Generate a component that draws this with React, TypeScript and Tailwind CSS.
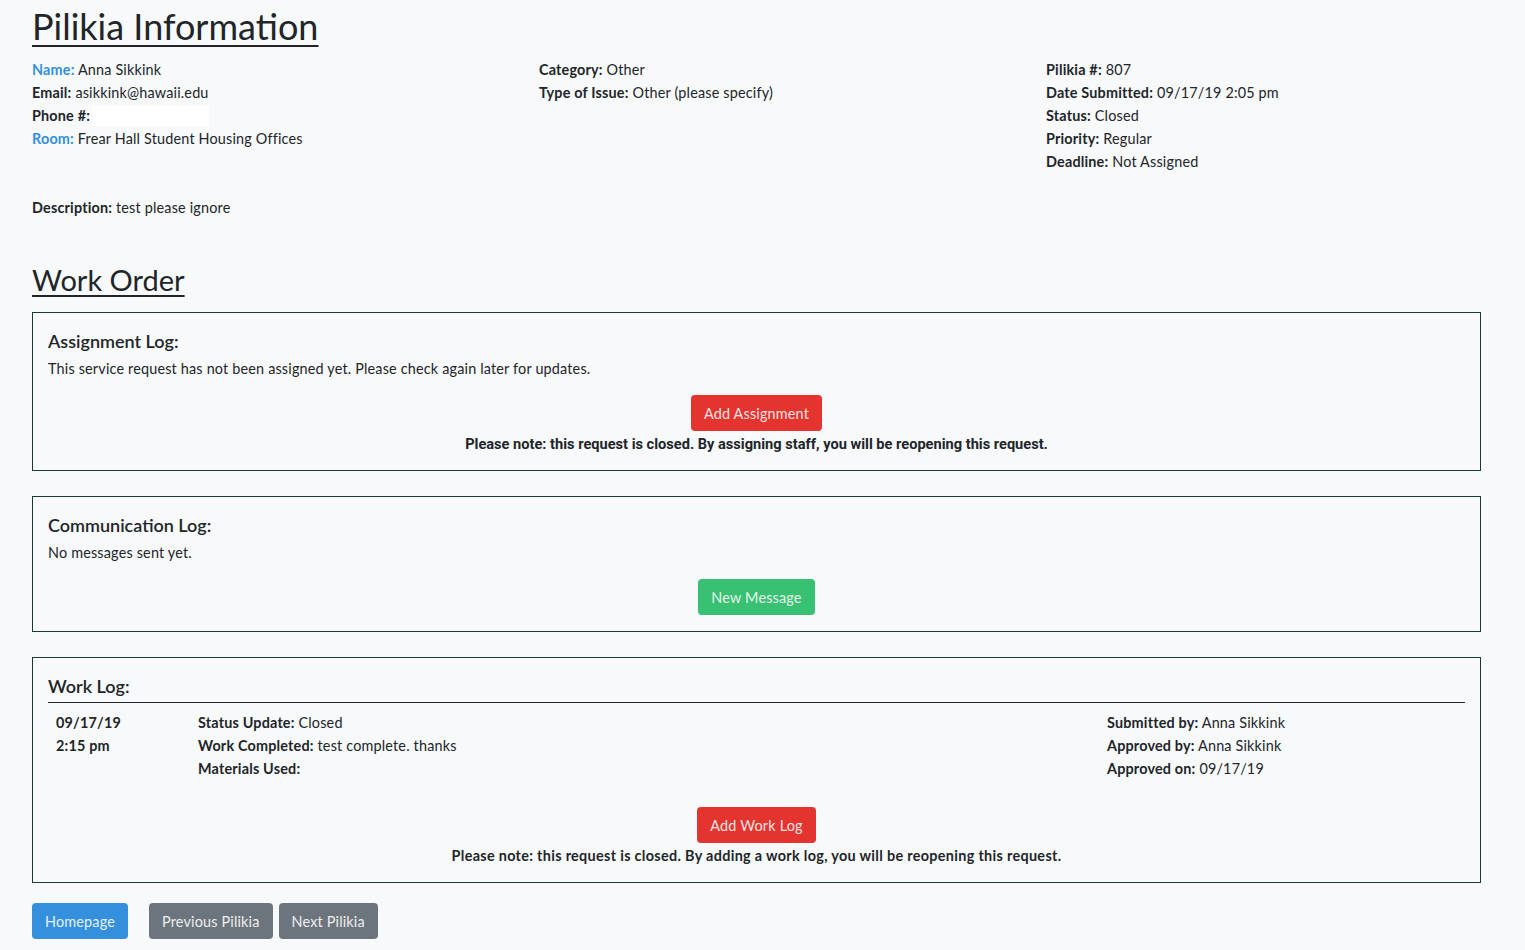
const font = "font-['Lato','Noto_Sans',sans-serif]";

function Field({ label, value, blue }: { label: string; value?: string; blue?: boolean }) {
  return (
    <div className="h-[23px]">
      <span className={blue ? "font-bold text-[#3490dc]" : "font-bold"}>{label}</span> {value}
    </div>
  );
}

function Box({ children, pb = "pb-[15px]" }: { children: React.ReactNode; pb?: string }) {
  return <div className={`border border-[#1c3b34] px-[15px] pt-[17px] ${pb}`}>{children}</div>;
}

export default function App() {
  return (
    <div className={`min-h-[950px] bg-[#f8f9fa] text-[#212529] text-[14.4px] leading-[23px] tracking-[0.18px] ${font}`}>
      <div className="pl-[32px] pr-[44px] pt-[4px]">
        <h1 className="text-[36px] leading-[44px] tracking-normal underline decoration-[2px] underline-offset-[5px]">Pilikia Information</h1>

        <div className="mt-[10px] grid grid-cols-[507px_507px_1fr]">
          <div>
            <Field label="Name:" value="Anna Sikkink" blue />
            <Field label="Email:" value="asikkink@hawaii.edu" />
            <div className="flex h-[23px] items-center">
              <span className="font-bold">Phone #:</span>
              <span className="ml-[2px] inline-block h-[20px] w-[117px] bg-white" />
            </div>
            <Field label="Room:" value="Frear Hall Student Housing Offices" blue />
          </div>
          <div>
            <Field label="Category:" value="Other" />
            <Field label="Type of Issue:" value="Other (please specify)" />
          </div>
          <div>
            <Field label="Pilikia #:" value="807" />
            <Field label="Date Submitted:" value="09/17/19 2:05 pm" />
            <Field label="Status:" value="Closed" />
            <Field label="Priority:" value="Regular" />
            <Field label="Deadline:" value="Not Assigned" />
          </div>
        </div>

        <div className="mt-[23px]">
          <Field label="Description:" value="test please ignore" />
        </div>

        <h2 className="mt-[43px] text-[29px] leading-[35px] tracking-normal underline decoration-[1.5px] underline-offset-[4px]">Work Order</h2>

        <div className="mt-[15px] flex flex-col gap-[25px]">
          <Box pb="pb-[14px]">
            <h5 className="text-[18px] font-semibold leading-[22px] tracking-normal">Assignment Log:</h5>
            <p className="mt-[5px]">This service request has not been assigned yet. Please check again later for updates.</p>
            <div className="mt-[15px] flex flex-col items-center">
              <button className="h-[36px] rounded-[4px] bg-[#e3342f] px-[13px] text-[#fbe3e2]">Add Assignment</button>
              <p className="mt-[2px] font-['Roboto',sans-serif] text-[14.6px] font-bold tracking-normal">
                Please note: this request is closed. By assigning staff, you will be reopening this request.
              </p>
            </div>
          </Box>

          <Box pb="pb-[16px]">
            <h5 className="text-[18px] font-semibold leading-[22px] tracking-normal">Communication Log:</h5>
            <p className="mt-[5px]">No messages sent yet.</p>
            <div className="mt-[15px] flex flex-col items-center">
              <button className="h-[36px] rounded-[4px] bg-[#38c172] px-[13px] text-[#e6f7ec]">New Message</button>
            </div>
          </Box>

          <Box>
            <h5 className="border-b border-[#212529] pb-[5px] text-[18px] font-semibold leading-[22px] tracking-normal">Work Log:</h5>
            <div className="mt-[8px] grid grid-cols-[142px_909px_1fr] pl-[8px]">
              <div className="font-bold">
                <div>09/17/19</div>
                <div>2:15 pm</div>
              </div>
              <div>
                <Field label="Status Update:" value="Closed" />
                <Field label="Work Completed:" value="test complete. thanks" />
                <Field label="Materials Used:" />
              </div>
              <div>
                <Field label="Submitted by:" value="Anna Sikkink" />
                <Field label="Approved by:" value="Anna Sikkink" />
                <Field label="Approved on:" value="09/17/19" />
              </div>
            </div>
            <div className="mt-[27px] flex flex-col items-center">
              <button className="h-[36px] rounded-[4px] bg-[#e3342f] px-[13px] text-[#fbe3e2]">Add Work Log</button>
              <p className="mt-[1px] font-bold tracking-[0.32px]">
                Please note: this request is closed. By adding a work log, you will be reopening this request.
              </p>
            </div>
          </Box>
        </div>

        <div className="mt-[20px] flex items-center">
          <button className="h-[36px] rounded-[4px] bg-[#3490dc] px-[13px] text-[#e7f1fb]">Homepage</button>
          <button className="ml-[21px] h-[36px] rounded-[4px] bg-[#6c757d] px-[13px] text-[#eceeef]">Previous Pilikia</button>
          <button className="ml-[6px] h-[36px] rounded-[4px] bg-[#6c757d] px-[13px] text-[#eceeef]">Next Pilikia</button>
        </div>
      </div>
    </div>
  );
}
